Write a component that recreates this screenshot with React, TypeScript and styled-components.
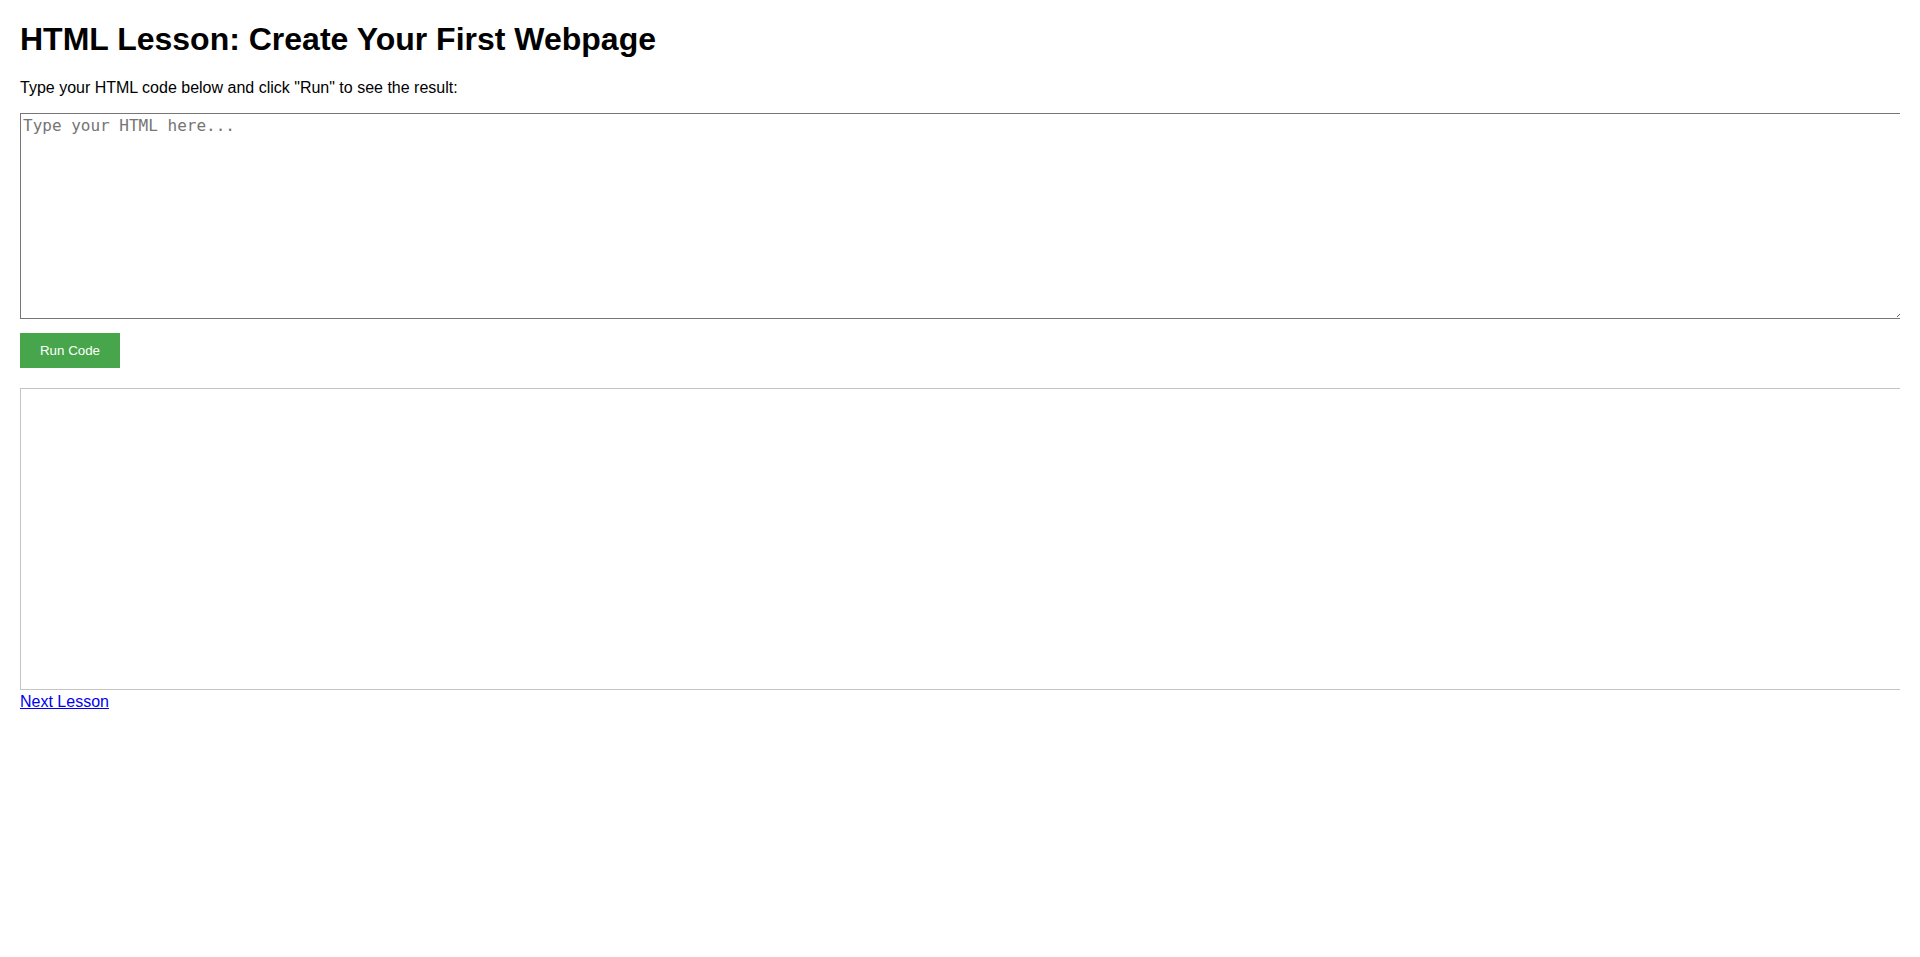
import React from "react";
import styled, { createGlobalStyle } from "styled-components";

const GlobalStyle = createGlobalStyle`
  html, body { background: #ffffff; }
  body {
    margin: 21px 20px 20px;
    font-family: "Liberation Sans", Arial, sans-serif;
    color: #000;
  }
`;

const Page = styled.main`
  display: block;
`;

const Title = styled.h1`
  font-size: 32px;
  font-weight: bold;
  line-height: 37px;
  margin: 0 0 21px;
`;

const Intro = styled.p`
  font-size: 16px;
  line-height: 18px;
  margin: 0 0 16px;
`;

const Editor = styled.textarea`
  display: block;
  box-sizing: content-box;
  width: 100%;
  height: 200px;
  padding: 2px;
  margin: 0;
  border: 1px solid #767676;
  font-family: "DejaVu Sans Mono", monospace;
  font-size: 16px;
  line-height: 19px;
  resize: both;
  &::placeholder { color: #757575; }
`;

const RunButton = styled.button`
  display: block;
  margin-top: 14px;
  width: 100px;
  height: 35px;
  padding: 0;
  border: none;
  background: #47a64c;
  color: #ffffff;
  font-family: "Liberation Sans", Arial, sans-serif;
  font-size: 13.33px;
  cursor: pointer;
`;

const Preview = styled.iframe`
  display: block;
  box-sizing: border-box;
  width: calc(100% + 2px);
  height: 302px;
  margin-top: 20px;
  border: 1px solid #c4c4c4;
  background: #fff;
`;

const NextLink = styled.a`
  display: inline-block;
  margin-top: 3px;
  font-size: 16px;
  line-height: 18px;
  color: #0000ee;
  text-decoration: underline;
`;

export default function App() {
  return (
    <Page>
      <GlobalStyle />
      <Title>HTML Lesson: Create Your First Webpage</Title>
      <Intro>Type your HTML code below and click "Run" to see the result:</Intro>
      <Editor placeholder="Type your HTML here..." />
      <RunButton type="button">Run Code</RunButton>
      <Preview title="result" />
      <NextLink href="#">Next Lesson</NextLink>
    </Page>
  );
}
